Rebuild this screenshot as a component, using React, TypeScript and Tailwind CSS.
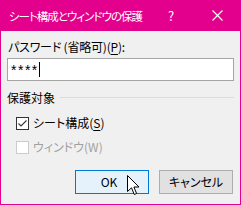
const font =
  "font-['Noto_Sans_CJK_JP','Noto_Sans',sans-serif] [font-feature-settings:'palt']";

function CloseIcon() {
  return (
    <svg width="11" height="11" viewBox="0 0 11 11" fill="none">
      <path d="M0.5 0.5L10.5 10.5M10.5 0.5L0.5 10.5" stroke="white" strokeWidth="1.1" />
    </svg>
  );
}

function Cursor() {
  return (
    <svg width="13" height="21" viewBox="0 0 13 21" className="absolute left-[51px] top-[4px]">
      <path
        d="M0.5 0.5L0.5 16.5L4.5 12.8L7.3 19.5L9.6 18.5L6.9 12L12 12Z"
        fill="white"
        stroke="black"
        strokeWidth="1"
        strokeLinejoin="round"
      />
    </svg>
  );
}

function Checkbox({ checked, disabled }: { checked?: boolean; disabled?: boolean }) {
  return (
    <div
      className={`w-[13px] h-[13px] border bg-white flex items-center justify-center ${
        disabled ? "border-[#cccccc]" : "border-[#333333]"
      }`}>
      {checked && (
        <svg width="11" height="11" viewBox="0 0 11 11" fill="none">
          <path d="M1.5 5.5L4 8L9.5 2.5" stroke="#333333" strokeWidth="1.1" />
        </svg>
      )}
    </div>
  );
}

export default function App() {
  return (
    <div className={`w-[241px] h-[205px] bg-[#e3008c] px-[1px] pb-[1px] flex flex-col ${font}`}>
      {/* Title bar */}
      <div className="h-[31px] shrink-0 flex items-center text-white text-[12px] leading-[16px]">
        <span className="pl-[8px] whitespace-nowrap text-[11.5px] tracking-[-1px]">
          シート構成とウィンドウの保護
        </span>
        <div className="ml-auto shrink-0 flex h-full">
          <div className="w-[46px] flex items-center justify-center text-[13px]">?</div>
          <div className="w-[46px] flex items-center justify-center">
            <CloseIcon />
          </div>
        </div>
      </div>

      {/* Body */}
      <div className="flex-1 bg-[#f0f0f0] px-[6px] pt-[8px] text-[12px] leading-[16px] text-black">
        <div className="pl-[1px] tracking-[-0.2px]">
          パスワード (省略可)(<span className="underline underline-offset-2">P</span>):
        </div>
        <div className="mt-[3px] h-[23px] border border-[#a5a5a5] bg-white flex items-center pl-[3px]">
          <span className="font-['Liberation_Sans',sans-serif] text-[14px] tracking-[1.5px]">****</span>
          <div className="w-px h-[15px] bg-black" />
        </div>

        <div className="mt-[9px] flex items-center">
          <span>保護対象</span>
          <div className="flex-1 h-px bg-[#dcdcdc] ml-[5px] -mt-[2px]" />
        </div>

        <div className="mt-[9px] ml-[9px] flex items-center gap-[4px]">
          <Checkbox checked />
          <span>
            シート構成(<span className="underline underline-offset-2">S</span>)
          </span>
        </div>
        <div className="mt-[8px] ml-[9px] flex items-center gap-[4px] text-[#a0a0a0]">
          <Checkbox disabled />
          <span>ウィンドウ(W)</span>
        </div>

        <div className="mt-[15px] mr-[1px] flex justify-end gap-[10px]">
          <div className="relative w-[74px] h-[24px] border border-[#0078d7] bg-[#e5f1fb] flex items-center justify-center">
            <span className="-ml-[6px]">OK</span>
            <Cursor />
          </div>
          <div className="w-[74px] h-[24px] border border-[#adadad] bg-[#e1e1e1] flex items-center justify-center">
            キャンセル
          </div>
        </div>
      </div>
    </div>
  );
}
